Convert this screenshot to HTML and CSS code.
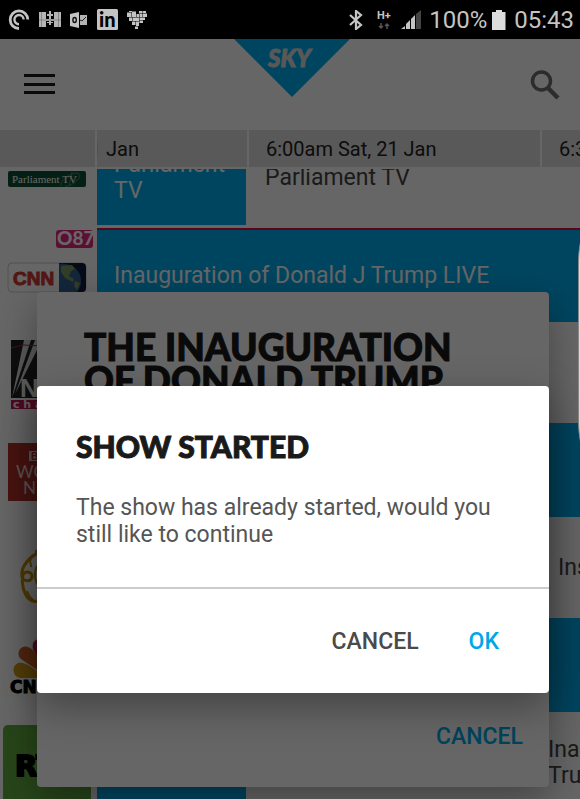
FILE: index.html
```
<!DOCTYPE html>
<html lang="en">
<head>
  <meta charset="UTF-8" />
  <meta name="viewport" content="width=device-width, initial-scale=1.0"/>
  <title>SKY TV Guide</title>
  <link rel="stylesheet" href="styles.css">
</head>
<body>
  <!-- Status bar -->
  <div class="status-bar">
    <div class="status-left">
      <svg width="22" height="22" viewBox="0 0 22 22" fill="none" stroke="#c4c4c4">
        <path d="M11 19.5A8.8 8.8 0 1 1 19.8 10.6" stroke-width="2.8"/>
        <path d="M11 15.2A4.6 4.6 0 1 1 15.6 10.6" stroke-width="2.4"/>
      </svg>
      <svg width="22" height="18" viewBox="0 0 22 18" fill="#b4b4b4">
        <path d="M0 1h7v15H0zM15 1h7v15h-7zM7 8h8v2H7zM8 3h6v2H8zM10 0h2v14h-2zM8 11h6v1H8z"/>
        <path d="M2.500 1v15M19.500 1v15M0 9h22" stroke="#666" stroke-width=".6"/>
      </svg>
      <svg width="17" height="16" viewBox="0 0 17 16">
        <path d="M0 2l9-2v16l-9-2z" fill="#c4c4c4"/>
        <path d="M10 3h7v10h-7z" fill="#b4b4b4"/>
        <path d="M10 8l2 1 4-4" stroke="#222" fill="none"/>
        <ellipse cx="4.600" cy="8" rx="1.700" ry="2.500" fill="none" stroke="#111" stroke-width="1.400"/>
      </svg>
      <svg width="22" height="22" viewBox="0 0 22 22">
        <rect x="1" width="21" height="21" rx="1.500" fill="#c4c4c4"/>
        <text class="linkedin" x="3" y="18">in</text>
      </svg>
      <svg width="20" height="18" viewBox="0 0 20 18" fill="#c4c4c4">
        <path d="M0 1.500h4.500V6H0zM2 0h3v1H2zM5 .5h4V6H5zM9.500 3H12v3H9.500zM12 0h3v2.500h-3zM12.500 3H15v3h-2.500zM15.500 0H19v2h-3.500zM15.500 2.500H20V6h-4.500zM2 6.500h3.500V10H2zM6 6.500h6V10H6zM12.500 6.500H18V9h-5.500zM12.500 9.500H16V12h-3.500zM5 10.500h3.500V14H5zM9 10.500h3V15H9zM8 15.500h3V18H8z"/>
      </svg>
    </div>
    <div class="status-right">
      <svg width="14" height="20" viewBox="0 0 14 20" fill="none" stroke="#c4c4c4" stroke-width="2.200">
        <path d="M1 5l11 10-5 4V1l5 4L1 15"/>
      </svg>
      <svg class="network" width="16" height="20" viewBox="0 0 16 20">
        <text x="0" y="9">H+</text>
        <path d="M4 13v5M2 16l2 2 2-2M10 19v-5M8 16l2-2 2 2" fill="none" stroke="#555" stroke-width="1.500"/>
      </svg>
      <svg width="20" height="20" viewBox="0 0 20 20" fill="#c4c4c4">
        <path d="M0 19l4-3v3zM5 14l4-4v9H5zM10 9l4-4v14h-4z"/>
        <path d="M15 4l5-4v19h-5z" fill="#444"/>
      </svg>
      <span class="percent">100%</span>
      <svg width="14" height="20" viewBox="0 0 14 20" fill="#dcdcdc">
        <path d="M4 0h6v2h3.500v18H0V2h4z"/>
      </svg>
      <span class="clock">05:43</span>
    </div>
  </div>

  <main class="screen">
    <header class="app-bar">
      <button class="icon-btn" aria-label="Menu">
        <svg width="31" height="22" viewBox="0 0 31 22" fill="#1a1a1a">
          <path d="M0 0h31v3H0zM0 9h31v3H0zM0 17h31v3H0z"/>
        </svg>
      </button>
      <svg class="logo" width="116" height="58" viewBox="0 0 116 58">
        <path d="M0 0h116L58 58z" fill="#00adef"/>
        <text x="34" y="28">SKY</text>
      </svg>
      <button class="icon-btn search" aria-label="Search">
        <svg width="30" height="30" viewBox="0 0 30 30" fill="none" stroke="#6e6e6e">
          <circle cx="11.500" cy="11" r="9" stroke-width="3.500"/>
          <path d="M18 18l10 10" stroke-width="4.500"/>
        </svg>
      </button>
    </header>

    <div class="timeline">
      <div class="slot"></div>
      <div class="slot past">5:30am Sat, 21 Jan</div>
      <div class="slot">6:00am Sat, 21 Jan</div>
      <div class="slot">6:30am Sat, 21 Jan</div>
    </div>

    <div class="guide">
      <div class="row">
        <div class="channel">
          <svg width="92" height="94" viewBox="0 0 92 94">
            <rect x="8" y="40" width="78" height="16" rx="2" fill="#0b5034"/>
            <path d="M61 55c-2-6 14-16 18-12s-10 14-14 12M72 41l-3 14" fill="none" stroke="#4b8a70"/>
            <text class="parliament" x="12" y="52">Parliament TV</text>
          </svg>
        </div>
        <div class="show on half">Parliament TV</div>
        <div class="show">Parliament TV</div>
      </div>
      <div class="row live">
        <div class="channel">
          <svg width="94" height="94" viewBox="0 0 94 94">
            <rect x="56" y="2" width="37" height="18" rx="3" fill="#e5267e"/>
            <text class="number" x="57" y="17">O87</text>
            <rect x="8" y="35" width="78" height="29" rx="4" fill="#fff" stroke="#ccc"/>
            <text class="cnn" x="13" y="57">CNN</text>
            <path d="M59 35h23a4 4 0 0 1 4 4v21a4 4 0 0 1-4 4H59z" fill="#101c38"/>
            <path d="M59 36c14-2 23 8 22 18 0 4-2 7-4 10H59z" fill="#315f92"/>
            <path d="M61 38l11-1 3 4-4 2-2 5 5 3-1 3-8-4-4-6zM75 53l5 2-3 7-3-4z" fill="#7f9a63"/>
          </svg>
        </div>
        <div class="show on">Inauguration of Donald J Trump LIVE</div>
      </div>
      <div class="row tall">
        <div class="channel">
          <svg width="92" height="101" viewBox="0 0 92 101">
            <rect x="11" y="18" width="75" height="58" fill="#222"/>
            <path d="M24 18h7L12 76zM35 18h7L15 72z" fill="#ddd"/>
            <path d="M11 26l12-3 20 1" fill="none" stroke="#a52a40"/>
            <text class="fox" x="20" y="75">N</text>
            <rect x="11" y="78" width="75" height="9" fill="#c8185a"/>
            <text class="fox-sub" x="13" y="86">c h a</text>
          </svg>
        </div>
      </div>
      <div class="row">
        <div class="channel">
          <svg width="92" height="94" viewBox="0 0 92 94">
            <rect x="8" y="20" width="78" height="58" fill="#b43228"/>
            <path d="M29 28h11v10H29zM42 28h11v10H42zM55 28h11v10H55z" fill="#e8d8d6"/>
            <text class="bbc" x="31" y="37">B</text>
            <text class="bbc-name" x="16" y="55">WORLD</text>
            <text class="bbc-name" x="23" y="71">NEWS</text>
          </svg>
        </div>
        <div class="show on"></div>
      </div>
      <div class="row tall">
        <div class="channel">
          <svg width="92" height="101" viewBox="0 0 92 101" fill="none" stroke="#c8930a">
            <path d="M40 35c-10 4-20 15-18 25 2 5 9 5 10 0s-7-7-9-2c-2 9 1 19 6 24 4 4 10 3 12-2" stroke-width="3"/>
            <path d="M36 33v3M31 42c-3 4 1 4 0 8M41 44c-8 8-7 18-3 24M27 74c3 9 9 11 11 11" stroke-width="2"/>
          </svg>
        </div>
        <div class="show on half hidden"></div>
        <div class="show hidden"></div>
        <div class="show">Inside Story</div>
      </div>
      <div class="row">
        <div class="channel">
          <svg width="92" height="94" viewBox="0 0 92 94">
            <path d="M46 60H20a8 8 0 0 1-2-15c7-2 15 5 28 15z" fill="#d49d18"/>
            <path d="M46 58L21 41a7 7 0 0 1 9-11c7 3 9 15 16 28z" fill="#d06226"/>
            <path d="M46 55L33 31c-2-7 4-12 10-9s5 15 3 33z" fill="#c01c50"/>
            <text class="cnbc" x="10" y="75">CNBC</text>
          </svg>
        </div>
        <div class="show on"></div>
      </div>
      <div class="row tall">
        <div class="channel">
          <svg width="92" height="101" viewBox="0 0 92 101">
            <rect x="3" y="13" width="88" height="90" rx="5" fill="#62ae40"/>
            <text class="rt" x="15" y="64">RT</text>
          </svg>
        </div>
        <div class="show on half short"></div>
        <div class="show narrow"></div>
        <div class="show">Inauguration<br>Trump</div>
      </div>
    </div>

    <!-- Dialog underneath -->
    <div class="layer">
      <section class="dialog recording">
        <h2>THE INAUGURATION<br>OF DONALD TRUMP</h2>
        <div class="actions">
          <button class="primary">CANCEL</button>
        </div>
      </section>
    </div>
    <div class="scrim"></div>
    <div class="edge-handle"></div>

    <!-- Active dialog -->
    <div class="layer">
      <section class="dialog confirm" role="alertdialog" aria-labelledby="confirmTitle">
        <h1 id="confirmTitle">SHOW STARTED</h1>
        <p>The show has already started, would you still like to continue</p>
        <div class="actions">
          <button>CANCEL</button>
          <button class="primary">OK</button>
        </div>
      </section>
    </div>
  </main>
</body>
</html>
```
FILE: styles.css
```
* {
  box-sizing: border-box;
}

body {
  margin: 0;
  height: 100vh;
  display: flex;
  flex-direction: column;
  overflow: hidden;
  font-family: Roboto, sans-serif;
  font-size: 23px;
  background: #000;
}

button {
  border: none;
  background: none;
  padding: 0;
  font-family: inherit;
  cursor: pointer;
}

svg {
  display: block;
  flex-shrink: 0;
}

/* Status bar */
.status-bar {
  display: flex;
  justify-content: space-between;
  align-items: center;
  height: 39px;
  flex-shrink: 0;
  padding: 0 6px 0 8px;
  color: #c4c4c4;
  font-size: 24px;
}

.status-left {
  display: flex;
  align-items: center;
  gap: 9px;
}

.status-right {
  display: flex;
  align-items: center;
  gap: 8px;
}

.network {
  margin-left: 6px;
}

.network text {
  font: bold 11px Roboto, sans-serif;
  fill: #c4c4c4;
}

.percent {
  margin-right: -3px;
}

.linkedin {
  font: 900 20px Lato, sans-serif;
  fill: #000;
}

/* App bar */
.screen {
  position: relative;
  flex: 1;
  overflow: hidden;
  background: #fff;
}

.app-bar {
  display: grid;
  grid-template-columns: 1fr auto 1fr;
  align-items: center;
  height: 91px;
  padding: 0 20px 0 24px;
}

.icon-btn {
  justify-self: start;
}

.icon-btn.search {
  justify-self: end;
}

.logo {
  align-self: start;
}

.logo text {
  font: italic 900 24px Lato, sans-serif;
  fill: #ddd;
  stroke: #ddd;
  stroke-width: 1px;
}

/* Timeline */
.timeline {
  display: grid;
  grid-template-columns: 95px 150px 291px 1fr;
  gap: 2px;
  height: 39px;
  padding-bottom: 2px;
}

.slot {
  display: flex;
  align-items: center;
  min-width: 0;
  overflow: hidden;
  padding-left: 17px;
  background: #dedede;
  color: #222;
  font-size: 20px;
  white-space: nowrap;
}

.slot.past {
  justify-content: flex-end;
  padding: 0 108px 0 0;
}

/* Guide */
.guide {
  display: flow-root;
  overflow: hidden;
}

.row {
  display: flex;
  height: 94px;
}

.row:first-child {
  margin: -38px 0 3px;
}

.row.tall {
  height: 101px;
}

.channel {
  width: 97px;
  flex-shrink: 0;
}

.show {
  display: flex;
  align-items: center;
  flex: 1 0 auto;
  padding: 0 17px;
  color: #444;
  line-height: 26px;
}

.show.on {
  background: #00adef;
  color: #fff;
}

.show.half {
  flex: 0 0 149px;
  margin-right: 2px;
}

.show.hidden {
  visibility: hidden;
}

.show.half + .show.hidden {
  flex: 0 0 293px;
}

.show.short {
  height: 94px;
}

.show.narrow {
  flex: 0 0 283px;
}

.live .show {
  border-top: 2px solid #e2103c;
}

.parliament {
  font: 11px "Liberation Serif", serif;
  fill: #fff;
}

.number {
  font: 900 19px Lato, sans-serif;
  fill: #fff;
}

.cnn {
  font: bold 19px "Liberation Sans", sans-serif;
  fill: #d33a36;
  stroke: #d33a36;
  stroke-width: 1px;
}

.fox {
  font: bold 26px "Liberation Sans", sans-serif;
  fill: #eee;
}

.fox-sub {
  font: bold 11px "DejaVu Sans", sans-serif;
  fill: #fff;
}

.bbc {
  font: bold 10px "Liberation Sans", sans-serif;
  fill: #b43228;
}

.bbc-name {
  font: 17px Lato, sans-serif;
  fill: #e8d8d6;
}

.cnbc {
  font: bold 17px "DejaVu Sans", sans-serif;
  fill: #000;
  stroke: #000;
}

.rt {
  font: bold 29px "DejaVu Sans", sans-serif;
  fill: #000;
  stroke: #000;
  stroke-width: 2px;
}

/* Overlays */
.scrim {
  position: absolute;
  inset: 0;
  background: rgba(0, 0, 0, 0.6);
}

.edge-handle {
  position: absolute;
  top: 196px;
  right: -10px;
  width: 12px;
  height: 214px;
  border-left: 1px solid #888;
  border-radius: 10px / 50px;
  background: #d4dde0;
}

.layer {
  position: absolute;
  inset: 0;
  display: flex;
  align-items: center;
  padding: 241px 31px 0 37px;
}

.dialog {
  display: flex;
  flex-direction: column;
  flex: 1;
  border-radius: 4px;
  background: #fff;
  box-shadow: 0 14px 40px rgba(0, 0, 0, 0.35);
}

.dialog h1,
.dialog h2 {
  margin: 0;
  font-family: Lato, sans-serif;
  font-weight: 900;
  color: #1a1a1a;
  -webkit-text-stroke: 1px #1a1a1a;
}

.dialog h1 {
  padding: 40px 39px 0;
  font-size: 30px;
  line-height: 40px;
}

.dialog h2 {
  padding: 38px 47px 0;
  font-size: 37px;
  line-height: 33px;
}

.dialog p {
  margin: 0;
  padding: 28px 39px 39px;
  color: #555;
  font-size: 23px;
  line-height: 27px;
}

.actions {
  display: flex;
  justify-content: flex-end;
  align-items: center;
  gap: 50px;
}

.actions button {
  color: #4a4a4a;
  font-size: 23px;
  font-weight: 500;
}

.actions .primary {
  color: #00a7e8;
}

.recording {
  min-height: 495px;
}

.recording .actions {
  margin-top: auto;
  padding: 0 26px 37px;
}

.confirm .actions {
  height: 106px;
  padding: 0 50px;
  border-top: 2px solid #ccc;
}
```
